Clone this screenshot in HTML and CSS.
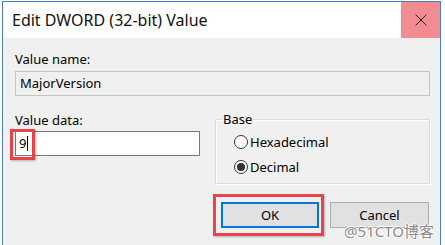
FILE: index.html
```html
<!DOCTYPE html>
<html lang="en">

<head>
    <meta charset="UTF-8">
    <title>Edit DWORD (32-bit) Value</title>
    <link rel="stylesheet" href="styles.css">
</head>

<body>
    <div class="dialog">
        <div class="title-bar">
            <span class="title">Edit DWORD (32-bit) Value</span>
            <button class="close-btn" aria-label="Close">
                <svg width="12" height="12" viewBox="0 0 12 12">
                    <path d="M0.5 0.5 L11.5 11.5 M11.5 0.5 L0.5 11.5" stroke="#222" stroke-width="1" fill="none" />
                </svg>
            </button>
        </div>
        <div class="dialog-body">
            <label class="field-label">Value name:</label>
            <div class="readonly-field">MajorVersion</div>

            <div class="data-row">
                <div class="data-col">
                    <label class="field-label">Value data:</label>
                    <div class="data-input-wrap">
                        <div class="data-input">9<span class="caret"></span></div>
                        <div class="highlight highlight-data"></div>
                    </div>
                </div>
                <fieldset class="base-group">
                    <legend>Base</legend>
                    <label class="radio"><span class="radio-circle"></span>Hexadecimal</label>
                    <label class="radio"><span class="radio-circle checked"></span>Decimal</label>
                </fieldset>
            </div>

            <div class="button-row">
                <div class="ok-wrap">
                    <button class="btn btn-default">OK</button>
                    <div class="highlight highlight-ok"></div>
                </div>
                <button class="btn">Cancel</button>
            </div>
        </div>
        <div class="watermark">@51CTO博客</div>
    </div>
</body>

</html>
```

FILE: styles.css
```css
body {
    margin: 0;
    padding: 0;
    background-color: #ffffff;
    font-family: "Noto Sans", "Open Sans", sans-serif;
    color: #000;
    overflow: hidden;
}

.dialog {
    position: relative;
    margin: 1px 0 0 2px;
    width: 437px;
    height: 244px;
    overflow: hidden;
    border: 1px solid #4a7fb5;
    border-bottom: none;
    background-color: #f0f0f0;
}

.title-bar {
    display: flex;
    align-items: center;
    justify-content: space-between;
    height: 36px;
    background-color: #fff;
}

.title {
    padding-left: 9px;
    font-size: 16px;
    color: #111;
}

.close-btn {
    width: 39px;
    height: 36px;
    border: none;
    padding: 0;
    background-color: #f28c91;
    display: flex;
    align-items: center;
    justify-content: center;
}

.dialog-body {
    padding: 12px 10px 0 12px;
    font-size: 13px;
}

.field-label {
    display: block;
    line-height: 18px;
}

.readonly-field {
    margin-top: 3px;
    height: 23px;
    line-height: 23px;
    padding-left: 4px;
    border: 1px solid #c4c4c4;
    background-color: #f0f0f0;
}

.data-row {
    display: flex;
    gap: 15px;
    margin-top: 14px;
}

.data-col {
    width: 185px;
    padding-top: 1px;
}

.data-input-wrap {
    position: relative;
    margin-top: 2px;
}

.data-input {
    height: 23px;
    line-height: 23px;
    padding-left: 3px;
    border: 1px solid #7a7a7a;
    background-color: #fff;
}

.caret {
    display: inline-block;
    width: 1px;
    height: 15px;
    margin-left: 1px;
    vertical-align: -3px;
    background-color: #000;
}

.highlight {
    position: absolute;
    border: 3px solid #e8434c;
    box-shadow: 1px 1px 2px rgba(0, 0, 0, 0.25);
}

.highlight-data {
    left: -5px;
    top: -2px;
    width: 19px;
    height: 25px;
}

.base-group {
    flex: 1;
    margin: 0;
    padding: 1px 8px 8px 18px;
    border: 1px solid #dcdcdc;
    box-shadow: inset 1px 1px 0 #fff, 1px 1px 0 #fff;
    height: 63px;
}

.base-group legend {
    padding: 0 1px;
    margin-left: -12px;
    font-size: 13px;
}

.radio {
    display: flex;
    align-items: center;
    gap: 2px;
    height: 25px;
}

.radio-circle {
    width: 12px;
    height: 12px;
    border: 1px solid #333;
    border-radius: 50%;
    background-color: #fff;
    display: flex;
    align-items: center;
    justify-content: center;
}

.radio-circle.checked::after {
    content: "";
    width: 8px;
    height: 8px;
    border-radius: 50%;
    background-color: #333;
}

.button-row {
    display: flex;
    justify-content: flex-end;
    gap: 11px;
    margin-top: 18px;
    padding-right: 1px;
}

.ok-wrap {
    position: relative;
}

.btn {
    width: 99px;
    height: 26px;
    padding: 0;
    border: 1px solid #adadad;
    background-color: #e1e1e1;
    font-family: "Noto Sans", "Open Sans", sans-serif;
    font-size: 13px;
    color: #000;
}

.btn-default {
    width: 98px;
    border: 2px solid #0078d7;
}

.highlight-ok {
    left: -8px;
    top: -8px;
    width: 105px;
    height: 36px;
}

.watermark {
    position: absolute;
    right: 6px;
    top: 218px;
    font-size: 15px;
    color: #8a8a8a;
    text-shadow: -1px 0 #fff, 1px 0 #fff, 0 -1px #fff, 0 1px #fff;
    font-family: "Noto Sans", "Noto Sans CJK SC", sans-serif;
}
```
